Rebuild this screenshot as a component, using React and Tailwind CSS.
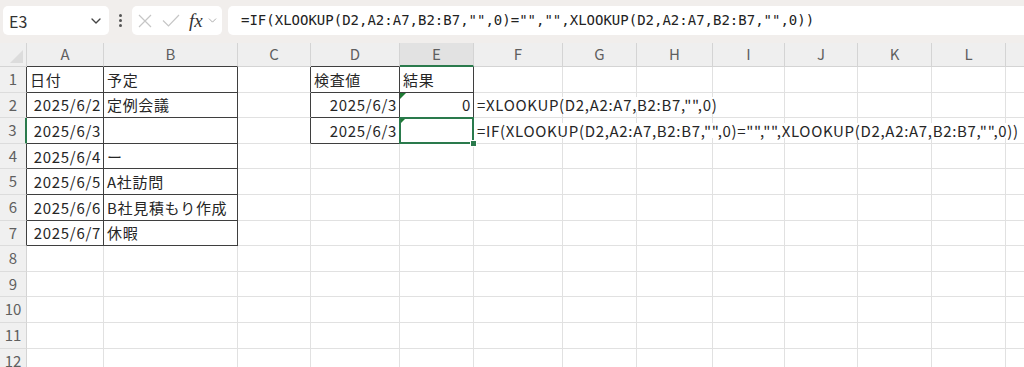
import { ChevronDown } from "lucide-react";

const COLS = ["A", "B", "C", "D", "E", "F", "G", "H", "I", "J", "K", "L", ""];
const COL_W = [
  "w-[77px]",
  "w-[134px]",
  "w-[73px]",
  "w-[89px]",
  "w-[74px]",
  "w-[89px]",
  "w-[74px]",
  "w-[76px]",
  "w-[72px]",
  "w-[73px]",
  "w-[74px]",
  "w-[74px]",
  "w-[90px]",
];
const ROWS = 12;

const DATA = {
  "1-0": { text: "日付" },
  "1-1": { text: "予定" },
  "1-3": { text: "検査値" },
  "1-4": { text: "結果" },
  "2-0": { text: "2025/6/2", right: true },
  "2-1": { text: "定例会議" },
  "3-0": { text: "2025/6/3", right: true },
  "4-0": { text: "2025/6/4", right: true },
  "4-1": { text: "ー" },
  "5-0": { text: "2025/6/5", right: true },
  "5-1": { text: "A社訪問" },
  "6-0": { text: "2025/6/6", right: true },
  "6-1": { text: "B社見積もり作成" },
  "7-0": { text: "2025/6/7", right: true },
  "7-1": { text: "休暇" },
  "2-3": { text: "2025/6/3", right: true },
  "3-3": { text: "2025/6/3", right: true },
  "2-4": { text: "0", right: true, flag: true },
  "3-4": { text: "", flag: true, selected: true },
  "2-5": { text: '=XLOOKUP(D2,A2:A7,B2:B7,"",0)', spill: true },
  "3-5": {
    text: '=IF(XLOOKUP(D2,A2:A7,B2:B7,"",0)="","",XLOOKUP(D2,A2:A7,B2:B7,"",0))',
    spill: true,
  },
};

function darkRight(r, c) {
  if (r >= 1 && r <= 7 && c >= -1 && c <= 1) return true;
  if (r >= 1 && r <= 3 && c >= 2 && c <= 4) return true;
  return false;
}

function darkBottom(r, c) {
  if (r >= 0 && r <= 7 && (c === 0 || c === 1)) return true;
  if (r >= 0 && r <= 3 && (c === 3 || c === 4)) return true;
  return false;
}

function Cell({ r, c }) {
  const cell = DATA[`${r}-${c}`];
  const right = darkRight(r, c) ? "border-r-[#3f3f3f]" : "border-r-[#e1e1e1]";
  const bottom = darkBottom(r, c) ? "border-b-[#3f3f3f]" : "border-b-[#e1e1e1]";

  return (
    <div
      className={`relative flex h-full shrink-0 items-center border-r border-b ${right} ${bottom} ${COL_W[c]} ${
        cell?.right ? "justify-end pr-[2px]" : "pl-[3px]"
      }`}
    >
      {cell?.flag ? (
        <div className="absolute left-0 top-0 h-0 w-0 border-t-[6px] border-r-[6px] border-t-[#1e7b34] border-r-transparent" />
      ) : null}
      {cell?.text ? (
        <span
          className={`whitespace-nowrap text-[15px] leading-none tracking-[0.68px] text-[#262626] ${
            cell.spill ? "relative z-10 bg-white pr-[2px]" : ""
          }`}
        >
          {cell.text}
        </span>
      ) : null}
      {cell?.selected ? (
        <>
          <div className="absolute -inset-px z-20 border-2 border-[#2a7a4c]" />
          <div className="absolute -bottom-[4px] -right-[4px] z-30 h-[7px] w-[7px] border border-white bg-[#2a7a4c]" />
        </>
      ) : null}
    </div>
  );
}

function Toolbar() {
  return (
    <div className="flex h-[43px] shrink-0 items-start bg-[#f1eeec] pt-[6px]">
      <div className="ml-[3px] flex h-[29px] w-[106px] items-center justify-between rounded-[5px] bg-white pl-[6px] pr-[5px]">
        <span className="text-[16px] text-[#333]">E3</span>
        <ChevronDown className="h-4 w-4 text-[#444]" strokeWidth={2} />
      </div>
      <div className="flex h-[29px] w-[23px] items-center justify-center">
        <span className="flex flex-col gap-[2px]">
          <span className="h-[3px] w-[3px] rounded-full bg-[#555]" />
          <span className="h-[3px] w-[3px] rounded-full bg-[#555]" />
          <span className="h-[3px] w-[3px] rounded-full bg-[#555]" />
        </span>
      </div>
      <div className="flex h-[29px] w-[90px] items-center rounded-[5px] bg-white pl-[6px]">
        <svg width="14" height="14" viewBox="0 0 14 14" className="text-[#c6c6c6]">
          <path d="M1 1L13 13M13 1L1 13" stroke="currentColor" strokeWidth="1.2" fill="none" />
        </svg>
        <svg width="18" height="13" viewBox="0 0 18 13" className="ml-[10px] text-[#c6c6c6]">
          <path d="M1 6.5L6.5 12L17 1" stroke="currentColor" strokeWidth="1.2" fill="none" />
        </svg>
        <span className="ml-[9px] font-['Liberation_Serif'] text-[19px] italic leading-none text-[#333]">
          fx
        </span>
        <ChevronDown className="ml-[3px] h-[13px] w-[13px] text-[#9a9a9a]" strokeWidth={1.5} />
      </div>
      <div className="ml-[6px] flex h-[29px] flex-1 items-center rounded-l-[5px] bg-white pl-[13px]">
        <span className="whitespace-nowrap font-['DejaVu_Sans_Mono'] text-[14px] text-[#222]">
          =IF(XLOOKUP(D2,A2:A7,B2:B7,"",0)="","",XLOOKUP(D2,A2:A7,B2:B7,"",0))
        </span>
      </div>
    </div>
  );
}

export default function App() {
  return (
    <div className="flex h-[367px] w-[1024px] flex-col overflow-hidden bg-white font-['Noto_Sans_CJK_JP',sans-serif]">
      <Toolbar />

      <div className="flex h-[24px] shrink-0 bg-[#efefef]">
        <div className="relative w-[27px] shrink-0 border-r border-b border-r-[#d4d4d4] border-b-[#d4d4d4]">
          <div className="absolute bottom-[3px] right-[3px] h-0 w-0 border-b-[13px] border-l-[13px] border-b-[#dcdcdc] border-l-transparent" />
        </div>
        {COLS.map((col, c) => (
          <div
            key={c}
            className={`flex shrink-0 items-center justify-center border-r border-r-[#d4d4d4] text-[15px] text-[#5f5f5f] ${COL_W[c]} ${
              c === 4
                ? "border-b-2 border-b-[#2a7a4c] bg-[#e2e2e2]"
                : darkBottom(0, c)
                  ? "border-b border-b-[#3f3f3f]"
                  : "border-b border-b-[#d4d4d4]"
            }`}
          >
            {col}
          </div>
        ))}
      </div>

      {Array.from({ length: ROWS }, (_, i) => i + 1).map((r) => (
        <div key={r} className="flex h-[25.6px] shrink-0">
          <div
            className={`flex w-[27px] shrink-0 items-center justify-center border-b border-b-[#dcdcdc] bg-[#f0f0f0] text-[15px] text-[#5f5f5f] ${
              r === 3
                ? "border-r-2 border-r-[#2a7a4c]"
                : darkRight(r, -1)
                  ? "border-r border-r-[#3f3f3f]"
                  : "border-r border-r-[#d4d4d4]"
            }`}
          >
            {r}
          </div>
          {COLS.map((col, c) => (
            <Cell key={c} r={r} c={c} />
          ))}
        </div>
      ))}
    </div>
  );
}
